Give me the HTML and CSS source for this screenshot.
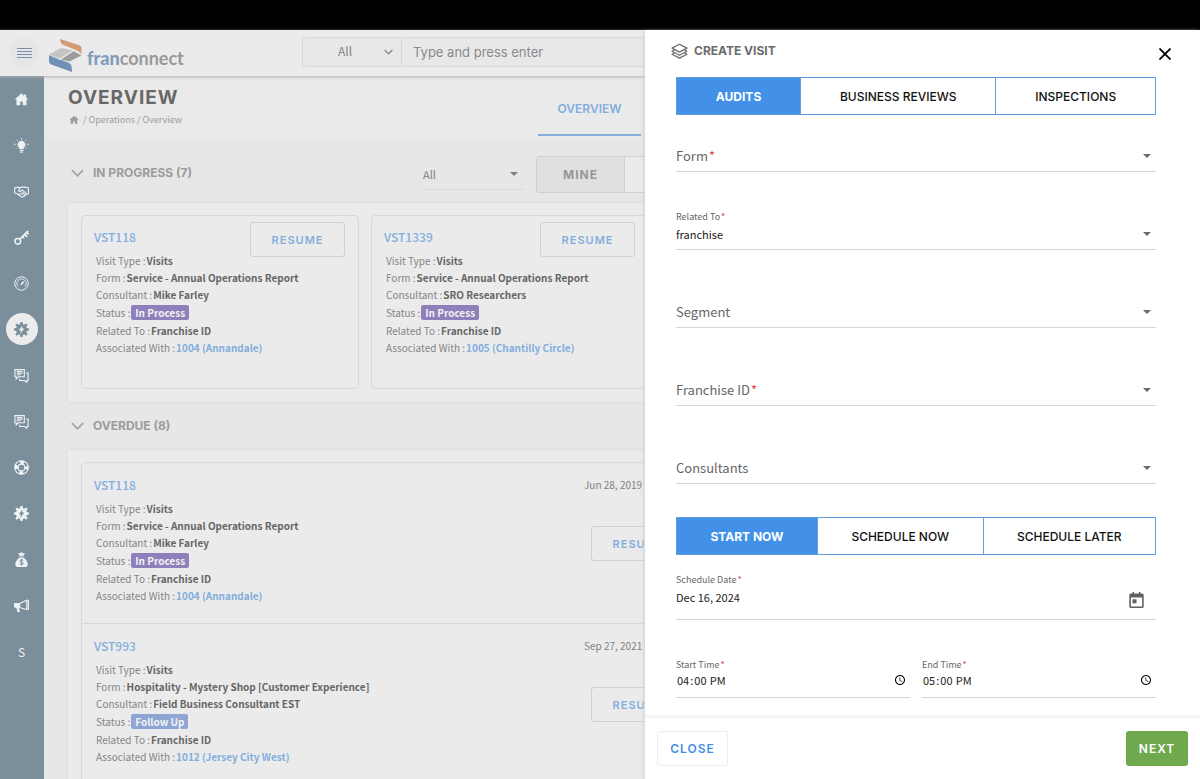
FILE: index.html
```html
<!DOCTYPE html>
<html lang="en-US">
<head>
<meta charset="utf-8">
<meta name="viewport" content="width=device-width, initial-scale=1">
<title>Create Visit</title>
<link rel="stylesheet" href="styles.css">
</head>
<body>
<svg class="defs" aria-hidden="true">
  <symbol id="home" viewBox="0 0 24 24"><path fill="currentColor" d="M12 2 1 12h3v9h6v-6h4v6h6v-9h3l-4-4V4h-3v2z"/></symbol>
  <symbol id="chat" viewBox="0 0 24 24"><path fill="none" stroke="currentColor" stroke-width="1.8" d="M1.500 2.500h15v11.500h-9.500l-3.500 3.500v-3.500h-2zM19 8h3.500v12h-2v3l-3.500-3h-8v-3M4.500 5.800h9M4.500 8.300h9M4.500 10.800h6"/></symbol>
  <symbol id="gear" viewBox="0 0 24 24"><path fill="currentColor" fill-rule="evenodd" d="M10.300 0h3.400l.8 3.500 1.800.8L19.500 2.200 21.800 4.500 19.700 7.700l.8 1.800 3.500.8v3.400l-3.500.8-.8 1.800 2.100 3.200-2.300 2.300-3.200-2.100-1.800.8-.8 3.500h-3.400l-.8-3.500-1.800-.8-3.200 2.100-2.300-2.300 2.100-3.200-.8-1.800L0 13.700v-3.400l3.500-.8.8-1.800L2.200 4.500 4.500 2.200l3.200 2.100 1.800-.8zM13.500 5.500 7.500 13h3.500l-1 6 6.500-8.500H13z"/></symbol>
  <symbol id="chev" viewBox="0 0 14 8"><path fill="none" stroke="currentColor" stroke-width="2" d="M1 1l6 6 6-6"/></symbol>
  <symbol id="caret" viewBox="0 0 8 4"><path fill="currentColor" d="M0 0h8L4 4z"/></symbol>
</svg>

<div class="strip"></div>
<div class="app">
  <header class="header">
    <button class="menu" aria-label="Menu"><svg viewBox="0 0 15 11"><path stroke="currentColor" d="M0 .5h15M0 3.500h15M0 6.500h15M0 9.500h15"/></svg></button>
    <a class="logo" href="#">
      <svg viewBox="0 0 34 34" aria-hidden="true">
        <path fill="#d49a74" d="M12 0c.5 4 2 6 6 7l9 3.500c4 1.500 6 3 6.500 5.500V9c0-1.500-1-2.500-3-3z"/>
        <path fill="#c4c4c2" d="M1 15.500 13 9l12 2.500L13 20z"/>
        <path fill="#9b9b99" d="M13 20.500 25.500 12l8 4.500-12 6z"/>
        <path fill="#7090b5" d="M1 16c6 3.500 14 5 20 8 2.500 1.200 3 4 3 9L6 26.500c-4-1.500-5-2.500-5-5z"/>
        <path fill="none" stroke="#ebebeb" stroke-width="1.200" d="M11 20.500 26 11.500"/>
      </svg>
      <span class="brand"><b>fran</b>connect</span>
    </a>
    <form class="search">
      <span class="scope"><select aria-label="Search scope"><option>All</option></select><svg><use href="#chev"/></svg></span>
      <input type="text" aria-label="Search" placeholder="Type and press enter">
    </form>
  </header>

  <div class="body">
    <nav class="rail" aria-label="Modules">
      <a href="#" aria-label="Home"><svg><use href="#home"/></svg></a>
      <a href="#" aria-label="Leads"><svg viewBox="0 0 24 24"><path fill="currentColor" d="M12 4.500a6 6 0 0 0-3.500 11V18h7v-2.500a6 6 0 0 0-3.500-11zM9 19h6v2H9zM10 22h4v1.500h-4z"/><path fill="none" stroke="currentColor" stroke-width="1.300" d="M12 0v2.500M4.500 3l1.700 1.700M19.500 3l-1.700 1.700M0 10h3.500M20.500 10H24M4.300 16.500l1.500-1M19.700 16.500l-1.500-1"/></svg></a>
      <a href="#" aria-label="Sales"><svg viewBox="0 0 24 24"><path fill="none" stroke="currentColor" stroke-width="1.800" stroke-linejoin="round" d="M1 6l5-1 3 1.500L12 5h5l6 1v9.500l-3 1-5 4-3 .5-7-5.500-4-1zM9 6.500 7.500 11l2 1 3.500-2.500 7 6M8 15l2 3M11 14l3 4M14 13l3 4"/></svg></a>
      <a href="#" aria-label="Access"><svg viewBox="0 0 24 24"><circle cx="6" cy="18" r="4.600" fill="none" stroke="currentColor" stroke-width="2.400"/><path fill="none" stroke="currentColor" stroke-width="2.800" d="M9.500 14.500 22.500 1.500M17 7l4 4M13.500 10.500l2.500 2.500M20 3.500l3.500 3.500"/></svg></a>
      <a href="#" aria-label="Performance"><svg viewBox="0 0 24 24"><circle cx="12" cy="12" r="10.800" fill="none" stroke="currentColor" stroke-width="1.600"/><path fill="none" stroke="currentColor" stroke-width="1.400" d="M6.500 17a7.400 7.400 0 1 1 11 0"/><path stroke="currentColor" stroke-width="2.400" d="M11 14l4.500-5"/></svg></a>
      <a href="#" class="on" aria-label="Operations"><svg><use href="#gear"/></svg></a>
      <a href="#" aria-label="Messages"><svg><use href="#chat"/></svg></a>
      <a href="#" aria-label="Feedback"><svg><use href="#chat"/></svg></a>
      <a href="#" aria-label="Support"><svg viewBox="0 0 24 24"><circle cx="12" cy="12" r="8" fill="none" stroke="currentColor" stroke-width="6" stroke-dasharray="6.280 6.280" stroke-dashoffset="3.140"/><circle cx="12" cy="12" r="10.800" fill="none" stroke="currentColor" stroke-width="1.800"/><circle cx="12" cy="12" r="5.500" fill="none" stroke="currentColor" stroke-width="1.800"/></svg></a>
      <a href="#" aria-label="Settings"><svg><use href="#gear"/></svg></a>
      <a href="#" aria-label="Finance"><svg viewBox="0 0 24 24"><path fill="currentColor" d="M6 1l3 1.500L12 0l3 2.500L18 1l-3 5H9zM8.500 7h7v1.500h-7z"/><path fill="currentColor" d="M8.500 9h7c4 3 6.500 7 6.500 11 0 2.500-1.500 4-4 4H6c-2.500 0-4-1.500-4-4 0-4 2.500-8 6.500-11z"/><path fill="none" stroke="#7b8e9c" stroke-width="1.600" d="M15 13.500c-1-1.500-5.500-1.500-5.500.8s5.500 1.400 5.500 3.700-4.500 2.500-6 .7M12 11v10.500"/></svg></a>
      <a href="#" aria-label="Marketing"><svg viewBox="0 0 24 24"><path fill="currentColor" d="M0 8h10v8H8l1.500 6.500h-4L4 16H2.500L0 14z"/><path fill="none" stroke="currentColor" stroke-width="1.800" d="M10 8.500 20.500 3.500v15L10 15.500"/><path stroke="currentColor" stroke-width="2" d="M23 3v16"/></svg></a>
      <a href="#" class="letter">S</a>
    </nav>

    <main class="main">
      <div class="titlebar">
        <div>
          <h1>OVERVIEW</h1>
          <div class="crumbs"><svg><use href="#home"/></svg><span>/ Operations / Overview</span></div>
        </div>
        <a class="tab" href="#">OVERVIEW</a>
      </div>

      <section>
        <div class="sechead tall">
          <h2><svg><use href="#chev"/></svg>IN PROGRESS (7)</h2>
          <span class="filter"><select aria-label="Filter"><option>All</option></select><svg><use href="#caret"/></svg></span>
          <span class="toggle"><button class="sel">MINE</button><button aria-label="Everyone"></button></span>
        </div>
        <div class="panel cards">
          <article class="card">
            <div class="cardhead"><a class="vid" href="#">VST118</a><button class="ghost">RESUME</button></div>
            <ul class="facts">
              <li>Visit Type : <b>Visits</b></li>
              <li>Form : <b>Service - Annual Operations Report</b></li>
              <li>Consultant : <b>Mike Farley</b></li>
              <li>Status : <span class="chip">In Process</span></li>
              <li>Related To : <b>Franchise ID</b></li>
              <li>Associated With : <a href="#">1004 (Annandale)</a></li>
            </ul>
          </article>
          <article class="card">
            <div class="cardhead"><a class="vid" href="#">VST1339</a><button class="ghost">RESUME</button></div>
            <ul class="facts">
              <li>Visit Type : <b>Visits</b></li>
              <li>Form : <b>Service - Annual Operations Report</b></li>
              <li>Consultant : <b>SRO Researchers</b></li>
              <li>Status : <span class="chip">In Process</span></li>
              <li>Related To : <b>Franchise ID</b></li>
              <li>Associated With : <a href="#">1005 (Chantilly Circle)</a></li>
            </ul>
          </article>
        </div>
      </section>

      <section>
        <div class="sechead"><h2><svg><use href="#chev"/></svg>OVERDUE (8)</h2></div>
        <div class="panel">
          <div class="list">
            <article class="row">
              <div>
                <a class="vid" href="#">VST118</a>
                <ul class="facts">
                  <li>Visit Type : <b>Visits</b></li>
                  <li>Form : <b>Service - Annual Operations Report</b></li>
                  <li>Consultant : <b>Mike Farley</b></li>
                  <li>Status : <span class="chip">In Process</span></li>
                  <li>Related To : <b>Franchise ID</b></li>
                  <li>Associated With : <a href="#">1004 (Annandale)</a></li>
                </ul>
              </div>
              <div class="side"><time>Jun 28, 2019</time><button class="ghost">RESUME</button></div>
            </article>
            <article class="row">
              <div>
                <a class="vid" href="#">VST993</a>
                <ul class="facts">
                  <li>Visit Type : <b>Visits</b></li>
                  <li>Form : <b>Hospitality - Mystery Shop [Customer Experience]</b></li>
                  <li>Consultant : <b>Field Business Consultant EST</b></li>
                  <li>Status : <span class="chip blue">Follow Up</span></li>
                  <li>Related To : <b>Franchise ID</b></li>
                  <li>Associated With : <a href="#">1012 (Jersey City West)</a></li>
                </ul>
              </div>
              <div class="side"><time>Sep 27, 2021 0</time><button class="ghost">RESUME</button></div>
            </article>
          </div>
        </div>
      </section>
    </main>
  </div>

  <aside class="drawer" role="dialog" aria-labelledby="dtitle">
    <div class="dhead">
      <h2 id="dtitle"><svg viewBox="0 0 24 22" aria-hidden="true"><path fill="none" stroke="currentColor" stroke-width="1.800" stroke-linejoin="round" d="M12 1.500 22.500 7 12 12.500 1.500 7zM4.500 9.800 1.500 11.400 12 17l10.500-5.600-3-1.600M4.500 14 1.500 15.600 12 21l10.500-5.400-3-1.600"/></svg>CREATE VISIT</h2>
      <button class="x" aria-label="Close panel"><svg viewBox="0 0 12 12"><path stroke="currentColor" stroke-width="1.800" d="M.5.5l11 11M11.500.5l-11 11"/></svg></button>
    </div>
    <form class="form">
      <div class="seg"><button type="button" class="active">AUDITS</button><button type="button">BUSINESS REVIEWS</button><button type="button">INSPECTIONS</button></div>
      <div class="fields">
        <div class="field empty"><label for="f1">Form<i>*</i></label><select id="f1"><option></option></select><svg class="caret"><use href="#caret"/></svg></div>
        <div class="field"><label for="f2">Related To<i>*</i></label><select id="f2"><option>franchise</option></select><svg class="caret"><use href="#caret"/></svg></div>
        <div class="field empty"><label for="f3">Segment</label><select id="f3"><option></option></select><svg class="caret"><use href="#caret"/></svg></div>
        <div class="field empty"><label for="f4">Franchise ID<i>*</i></label><select id="f4"><option></option></select><svg class="caret"><use href="#caret"/></svg></div>
        <div class="field empty"><label for="f5">Consultants</label><select id="f5"><option></option></select><svg class="caret"><use href="#caret"/></svg></div>
      </div>
      <div class="seg when"><button type="button" class="active">START NOW</button><button type="button">SCHEDULE NOW</button><button type="button">SCHEDULE LATER</button></div>
      <div class="field date">
        <label for="f6">Schedule Date<i>*</i></label><input id="f6" type="text" value="Dec 16, 2024">
        <button type="button" class="cal" aria-label="Pick a date"><svg viewBox="0 0 18 20"><path fill="currentColor" fill-rule="evenodd" d="M4 0h2v2h6V0h2v2h2q2 0 2 2v14q0 2-2 2H2q-2 0-2-2V4q0-2 2-2h2zM2 7v11h14V7zM4 9h5v5H4z"/></svg></button>
      </div>
      <div class="times">
        <div class="field"><label for="f7">Start Time<i>*</i></label><input id="f7" type="time" value="16:00"></div>
        <div class="field"><label for="f8">End Time<i>*</i></label><input id="f8" type="time" value="17:00"></div>
      </div>
    </form>
    <footer class="dfoot"><button class="close">CLOSE</button><button class="next">NEXT</button></footer>
  </aside>
</div>
</body>
</html>
```
FILE: styles.css
```css
:root {
  --head: Inter, "Liberation Sans", sans-serif;
  --text: "Noto Sans CJK SC", "Noto Sans", sans-serif;
  --blue: #4290e8;
  --soft-blue: #83aedd;
  --line: #d8d8d8;
}
* { box-sizing: border-box; }
body {
  margin: 0;
  height: 100vh;
  display: flex;
  flex-direction: column;
  overflow: hidden;
  background: #e7e7e7;
  font-family: var(--text);
  font-size: 11px;
  color: #828282;
}
h1, h2, ul { margin: 0; padding: 0; }
ul { list-style: none; }
a { color: var(--soft-blue); text-decoration: none; }
button, input, select { font: inherit; color: inherit; background: none; border: 0; padding: 0; margin: 0; min-width: 0; }
button { font-family: var(--head); cursor: pointer; }
select { appearance: none; }
.defs { position: absolute; width: 0; height: 0; }

.strip { height: 30px; flex: none; background: #000; }
.app { flex: 1; min-height: 0; display: flex; flex-direction: column; position: relative; }

/* header */
.header {
  flex: none;
  height: 46px;
  display: flex;
  align-items: center;
  padding: 0 24px 0 9px;
  background: #ebebeb;
  box-shadow: 0 1px 3px #b0b0b0;
  z-index: 1;
}
.menu { width: 30px; height: 30px; border-radius: 50%; background: #e6e6e6; color: #7b90a8; display: grid; place-items: center; }
.menu svg { width: 15px; height: 11px; }
.logo { display: flex; align-items: center; margin-left: 9px; width: 254px; flex: none; }
.logo svg { width: 34px; height: 34px; margin-top: 5px; }
.brand { font: 700 18px/24px Lato, sans-serif; color: #989898; margin: 9px 0 0 5px; }
.brand b { color: #7e9cbd; }
.search { flex: 1; display: flex; height: 30px; margin-bottom: 2px; border: 1px solid var(--line); border-radius: 4px; background: #e8e8e8; }
.scope { display: grid; width: 99px; border-right: 1px solid var(--line); }
.scope > * { grid-area: 1 / 1; }
.scope select { padding-left: 35px; font-size: 12px; line-height: 16px; height: 26px; }
.scope svg { width: 9px; height: 6px; place-self: center end; margin-right: 8px; pointer-events: none; }
.search input { flex: 1; padding-left: 11px; font-family: var(--head); font-size: 13px; }
.search input::placeholder { color: #8a8a8a; }

/* rail */
.body { flex: 1; min-height: 0; display: flex; }
.rail { width: 44px; flex: none; background: #7b8e9c; display: flex; flex-direction: column; align-items: center; padding-right: 1px; }
.rail a { width: 32px; height: 32px; margin: 7px 0; display: grid; place-items: center; color: #eef2f4; border-radius: 50%; }
.rail svg { width: 15px; height: 15px; }
.rail .on { background: #ececec; color: #7b8e9c; }
.rail .letter { font-size: 12px; }

/* page */
.main { flex: 1; min-width: 0; }
.titlebar { height: 62px; padding: 0 24px; display: grid; grid-template-columns: 470px 1fr; background: #eaeaea; }
h1 { font: 700 19px/22px var(--head); letter-spacing: 1px; color: #686868; margin-top: 11px; }
.crumbs { display: flex; align-items: center; gap: 4px; margin-top: 3px; font-size: 9px; line-height: 16px; color: #9c9c9c; }
.crumbs svg { width: 10px; height: 10px; margin-left: 1px; }
.tab { justify-self: start; width: 103px; height: 60px; padding-top: 6px; text-align: center; font: 600 12px/54px var(--head); border-bottom: 2px solid var(--soft-blue); }

.sechead { height: 48px; padding: 0 24px; display: flex; align-items: center; }
.sechead.tall { height: 65px; }
h2 { font: 700 12px/16px var(--head); color: #9c9c9c; }
.sechead h2 { width: 355px; padding-left: 3px; display: flex; align-items: center; gap: 9px; }
.tall h2 { margin-top: 4px; }
.sechead h2 svg { width: 13px; height: 8px; color: #a5a5a5; }
.filter { display: grid; width: 100px; height: 31px; margin: 7px 13px 0 0; border-bottom: 1px solid var(--line); }
.filter > * { grid-area: 1 / 1; }
.filter svg { width: 8px; height: 4px; place-self: center end; margin-right: 5px; pointer-events: none; }
.toggle { display: flex; height: 37px; margin-top: 7px; border: 1px solid #d0d0d0; border-radius: 3px; overflow: hidden; background: #ebebeb; }
.toggle button { width: 88px; font-weight: 700; font-size: 12px; letter-spacing: 1px; color: #979797; }
.toggle .sel { background: #e0e0e0; border-right: 1px solid #d0d0d0; }

.panel { margin: 0 24px; padding: 12px 13px 13px; background: #ebebeb; box-shadow: 0 0 4px #dadada; }
.cards { display: grid; grid-template-columns: repeat(auto-fill, 278px); gap: 12px; }
.card { border: 1px solid var(--line); border-radius: 4px; padding: 6px 13px 32px 12px; }
.cardhead { display: flex; justify-content: space-between; height: 30px; }
.vid { display: block; font-size: 12px; line-height: 30px; font-weight: 500; }
.ghost { width: 95px; height: 35px; flex: none; border: 1px solid #d0d0d0; border-radius: 3px; font-size: 11px; font-weight: 600; letter-spacing: 1px; color: var(--soft-blue); }
.facts { padding-left: 2px; line-height: 17px; font-size: 10px; white-space: nowrap; color: #858585; }
.facts li { display: flex; align-items: center; gap: 1px; }
.facts b { color: #666; }
.facts a { font-weight: 700; }
.chip { margin: 2px 0; padding: 0 4px; line-height: 15px; border-radius: 2px; background: #8f80bb; color: #f2f2f2; font-weight: 700; }
.chip.blue { background: #8fa5d3; }
.list { border: 1px solid var(--line); border-radius: 4px 4px 0 0; }
.row { display: grid; grid-template-columns: 490px 1fr; padding: 7px 12px 19px; border-bottom: 1px solid var(--line); }
.side time { display: block; line-height: 30px; font-size: 10px; }
.side .ghost { margin: 26px 0 0 7px; }

/* drawer */
.drawer {
  position: absolute;
  inset: 0 0 0 auto;
  width: 555px;
  max-width: 100%;
  z-index: 2;
  display: flex;
  flex-direction: column;
  background: #fff;
  box-shadow: -1px 2px 4px #cfcfcf;
  color: #222;
}
.dhead { display: flex; justify-content: space-between; align-items: center; padding: 11px 28px 0 26px; height: 30px; }
.dhead h2 { display: flex; align-items: center; gap: 6px; color: #6c6c6c; }
.dhead h2 svg { width: 17px; height: 16px; }
.x { color: #000; width: 14px; height: 18px; display: grid; place-items: end center; }
.x svg { width: 12px; height: 12px; }
.form { flex: 1; min-height: 0; padding: 17px 44px 0 31px; }
.seg { display: flex; height: 38px; border: 1px solid #5f9fdf; }
.seg button { flex: 1 1 auto; font-size: 12px; font-weight: 500; color: #111; border-right: 1px solid #5f9fdf; }
.seg button:last-child { border-right: 0; }
.seg .active { background: var(--blue); color: #fff; font-weight: 700; }
.fields { display: grid; gap: 34px; margin: 13px 0 33px; }
.field { display: grid; grid-template: 20px 16px / 1fr auto; padding-bottom: 7px; border-bottom: 1px solid #d6d6d6; line-height: 16px; }
.field label { grid-area: 1 / 1; font-size: 9px; line-height: 22px; color: #666; z-index: 1; }
.field i { color: #e04545; font-style: normal; margin-left: 1px; }
.field select, .field input { grid-area: 2 / 1 / 3 / 3; width: 100%; height: 16px; font-size: 11px; line-height: 16px; }
.field.empty label { grid-row: 2; font-size: 13px; line-height: 16px; pointer-events: none; }
.caret { grid-area: 2 / 2; width: 8px; height: 4px; align-self: center; margin-right: 5px; color: #6a6a6a; pointer-events: none; }
.date { margin-top: 14px; padding-bottom: 14px; }
.cal { grid-area: 2 / 2; width: 15px; height: 16px; margin: 3px 12px 0 0; color: #606060; z-index: 1; }
.cal svg { width: 15px; height: 16px; display: block; }
.times { display: grid; grid-template-columns: 1fr 1fr; gap: 12px; margin-top: 34px; }
.times .field { grid-template-rows: 18px 16px; padding-bottom: 9px; }
.times input::-webkit-calendar-picker-indicator { width: 12px; height: 12px; padding: 0; margin-right: 4px; }
.dfoot { display: flex; justify-content: space-between; padding: 13px 12px; border-top: 1px solid #f0f0f0; box-shadow: 0 -1px 3px #ececec; }
.dfoot button { height: 35px; border-radius: 3px; font-size: 12px; font-weight: 600; letter-spacing: 1px; }
.close { width: 71px; border: 1px solid #e6eef8; color: var(--blue); }
.next { width: 62px; background: #70a84e; color: #fff; }
```
